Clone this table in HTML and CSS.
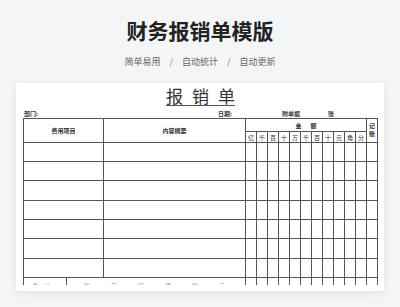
FILE: index.html
```html
<!DOCTYPE html>
<html lang="zh-CN">
<head>
<meta charset="utf-8">
<title>财务报销单模版</title>
<link rel="stylesheet" href="styles.css">
</head>
<body>
<header class="hero">
  <h1 class="title">财务报销单模版</h1>
  <p class="tags"><span>简单易用</span><span class="sep">/</span><span>自动统计</span><span class="sep">/</span><span>自动更新</span></p>
</header>
<main class="card">
  <div class="sheet">
    <div class="sheet-title"><span>报</span><span>销</span><span>单</span></div>
    <div class="info">
      <span class="info-dept">部门:</span>
      <span class="info-date">日期:</span>
      <span class="info-att">附单据</span>
      <span class="info-unit">张</span>
    </div>
    <div class="table-wrap">
      <div class="grid">
        <div class="cell h-item">费用项目</div>
        <div class="cell h-desc">内容摘要</div>
        <div class="cell h-amount"><span>金</span><span>额</span></div>
        <div class="cell h-book"><span>记</span><span>账</span></div>
        <div class="cell dl">亿</div><div class="cell dl">千</div><div class="cell dl">百</div><div class="cell dl">十</div><div class="cell dl">万</div><div class="cell dl">千</div><div class="cell dl">百</div><div class="cell dl">十</div><div class="cell dl">元</div><div class="cell dl">角</div><div class="cell dl">分</div>

        <div class="cell"></div><div class="cell"></div><div class="cell"></div><div class="cell"></div><div class="cell"></div><div class="cell"></div><div class="cell"></div><div class="cell"></div><div class="cell"></div><div class="cell"></div><div class="cell"></div><div class="cell"></div><div class="cell"></div><div class="cell"></div>
        <div class="cell"></div><div class="cell"></div><div class="cell"></div><div class="cell"></div><div class="cell"></div><div class="cell"></div><div class="cell"></div><div class="cell"></div><div class="cell"></div><div class="cell"></div><div class="cell"></div><div class="cell"></div><div class="cell"></div><div class="cell"></div>
        <div class="cell"></div><div class="cell"></div><div class="cell"></div><div class="cell"></div><div class="cell"></div><div class="cell"></div><div class="cell"></div><div class="cell"></div><div class="cell"></div><div class="cell"></div><div class="cell"></div><div class="cell"></div><div class="cell"></div><div class="cell"></div>
        <div class="cell"></div><div class="cell"></div><div class="cell"></div><div class="cell"></div><div class="cell"></div><div class="cell"></div><div class="cell"></div><div class="cell"></div><div class="cell"></div><div class="cell"></div><div class="cell"></div><div class="cell"></div><div class="cell"></div><div class="cell"></div>
        <div class="cell"></div><div class="cell"></div><div class="cell"></div><div class="cell"></div><div class="cell"></div><div class="cell"></div><div class="cell"></div><div class="cell"></div><div class="cell"></div><div class="cell"></div><div class="cell"></div><div class="cell"></div><div class="cell"></div><div class="cell"></div>
        <div class="cell"></div><div class="cell"></div><div class="cell"></div><div class="cell"></div><div class="cell"></div><div class="cell"></div><div class="cell"></div><div class="cell"></div><div class="cell"></div><div class="cell"></div><div class="cell"></div><div class="cell"></div><div class="cell"></div><div class="cell"></div>
        <div class="cell"></div><div class="cell"></div><div class="cell"></div><div class="cell"></div><div class="cell"></div><div class="cell"></div><div class="cell"></div><div class="cell"></div><div class="cell"></div><div class="cell"></div><div class="cell"></div><div class="cell"></div><div class="cell"></div><div class="cell"></div>
      </div>
      <div class="total">
        <div class="cell t-label"><span>合</span><span>计</span></div>
        <div class="cell t-words"><span>拾</span><span>万</span><span>仟</span><span>佰</span><span>拾</span><span>元</span></div>
        <div class="cell"></div><div class="cell"></div><div class="cell"></div><div class="cell"></div><div class="cell"></div><div class="cell"></div><div class="cell"></div><div class="cell"></div><div class="cell"></div><div class="cell"></div><div class="cell"></div><div class="cell"></div>
      </div>
    </div>
  </div>
</main>
</body>
</html>
```

FILE: styles.css
```css
* {
  box-sizing: border-box;
}

html, body {
  margin: 0;
  padding: 0;
}

body {
  width: 400px;
  height: 307px;
  overflow: hidden;
  background: #f4f5f7;
  font-family: "Noto Sans CJK SC", "Noto Sans", sans-serif;
  color: #222;
}

.hero {
  padding-top: 16px;
  text-align: center;
}

.title {
  margin: 0;
  font-size: 21px;
  line-height: 28px;
  font-weight: 700;
  color: #222;
}

.tags {
  margin: 12px 0 0;
  display: flex;
  justify-content: center;
  gap: 9px;
  font-size: 9px;
  line-height: 12px;
  color: #666;
}

.tags .sep {
  color: #888;
}

.card {
  display: block;
  width: 368px;
  margin: 15px auto 0;
  padding: 3px 6px 6px 7px;
  background: #fff;
  box-shadow: 0 2px 8px rgba(0, 0, 0, 0.08);
}

.sheet {
  color: #333;
}

.sheet-title {
  display: flex;
  justify-content: center;
  gap: 9px;
  width: max-content;
  margin: 0 auto;
  border-bottom: 1px solid #555;
  font-size: 17px;
  line-height: 19px;
  color: #333;
}

.info {
  display: flex;
  margin-top: 4px;
  height: 8px;
  padding-left: 1px;
  font-size: 6px;
  line-height: 8px;
  font-weight: 700;
  color: #333;
}

.info-dept {
  width: 194px;
}

.info-date {
  width: 64px;
}

.info-unit {
  margin-left: 28px;
}

.table-wrap {
  height: 167px;
  overflow: hidden;
}

.grid {
  display: grid;
  grid-template-columns: 79px 141px repeat(11, 10px) 10px;
  grid-template-rows: 12px 10px 18px 18px 19px 18px 18px 19px 18px;
  gap: 1px;
  padding: 1px;
  width: max-content;
  background: #555;
}

.cell {
  background: #fff;
  font-size: 6px;
  line-height: 7px;
  color: #333;
}

.h-item {
  grid-column: 1;
  grid-row: 1 / 3;
  display: flex;
  align-items: center;
  justify-content: center;
  font-weight: 700;
}

.h-desc {
  grid-column: 2;
  grid-row: 1 / 3;
  display: flex;
  align-items: center;
  justify-content: center;
  font-weight: 700;
}

.h-amount {
  grid-column: 3 / 14;
  grid-row: 1;
  display: flex;
  align-items: center;
  justify-content: center;
  gap: 9px;
  font-weight: 700;
}

.h-book {
  grid-column: 14;
  grid-row: 1 / 3;
  display: flex;
  flex-direction: column;
  align-items: center;
  padding-top: 3px;
  line-height: 7.5px;
  font-weight: 700;
}

.dl {
  display: flex;
  align-items: center;
  justify-content: center;
}

.total {
  display: grid;
  grid-template-columns: 42px 178px repeat(11, 10px) 10px;
  grid-template-rows: 18px;
  gap: 1px;
  padding: 0 1px 1px;
  width: max-content;
  background: #555;
}

.t-label {
  display: flex;
  gap: 6px;
  padding: 4px 0 0 8px;
  color: #777;
}

.t-words {
  display: flex;
  gap: 21px;
  padding: 4px 0 0 17px;
  color: #999;
}
```
